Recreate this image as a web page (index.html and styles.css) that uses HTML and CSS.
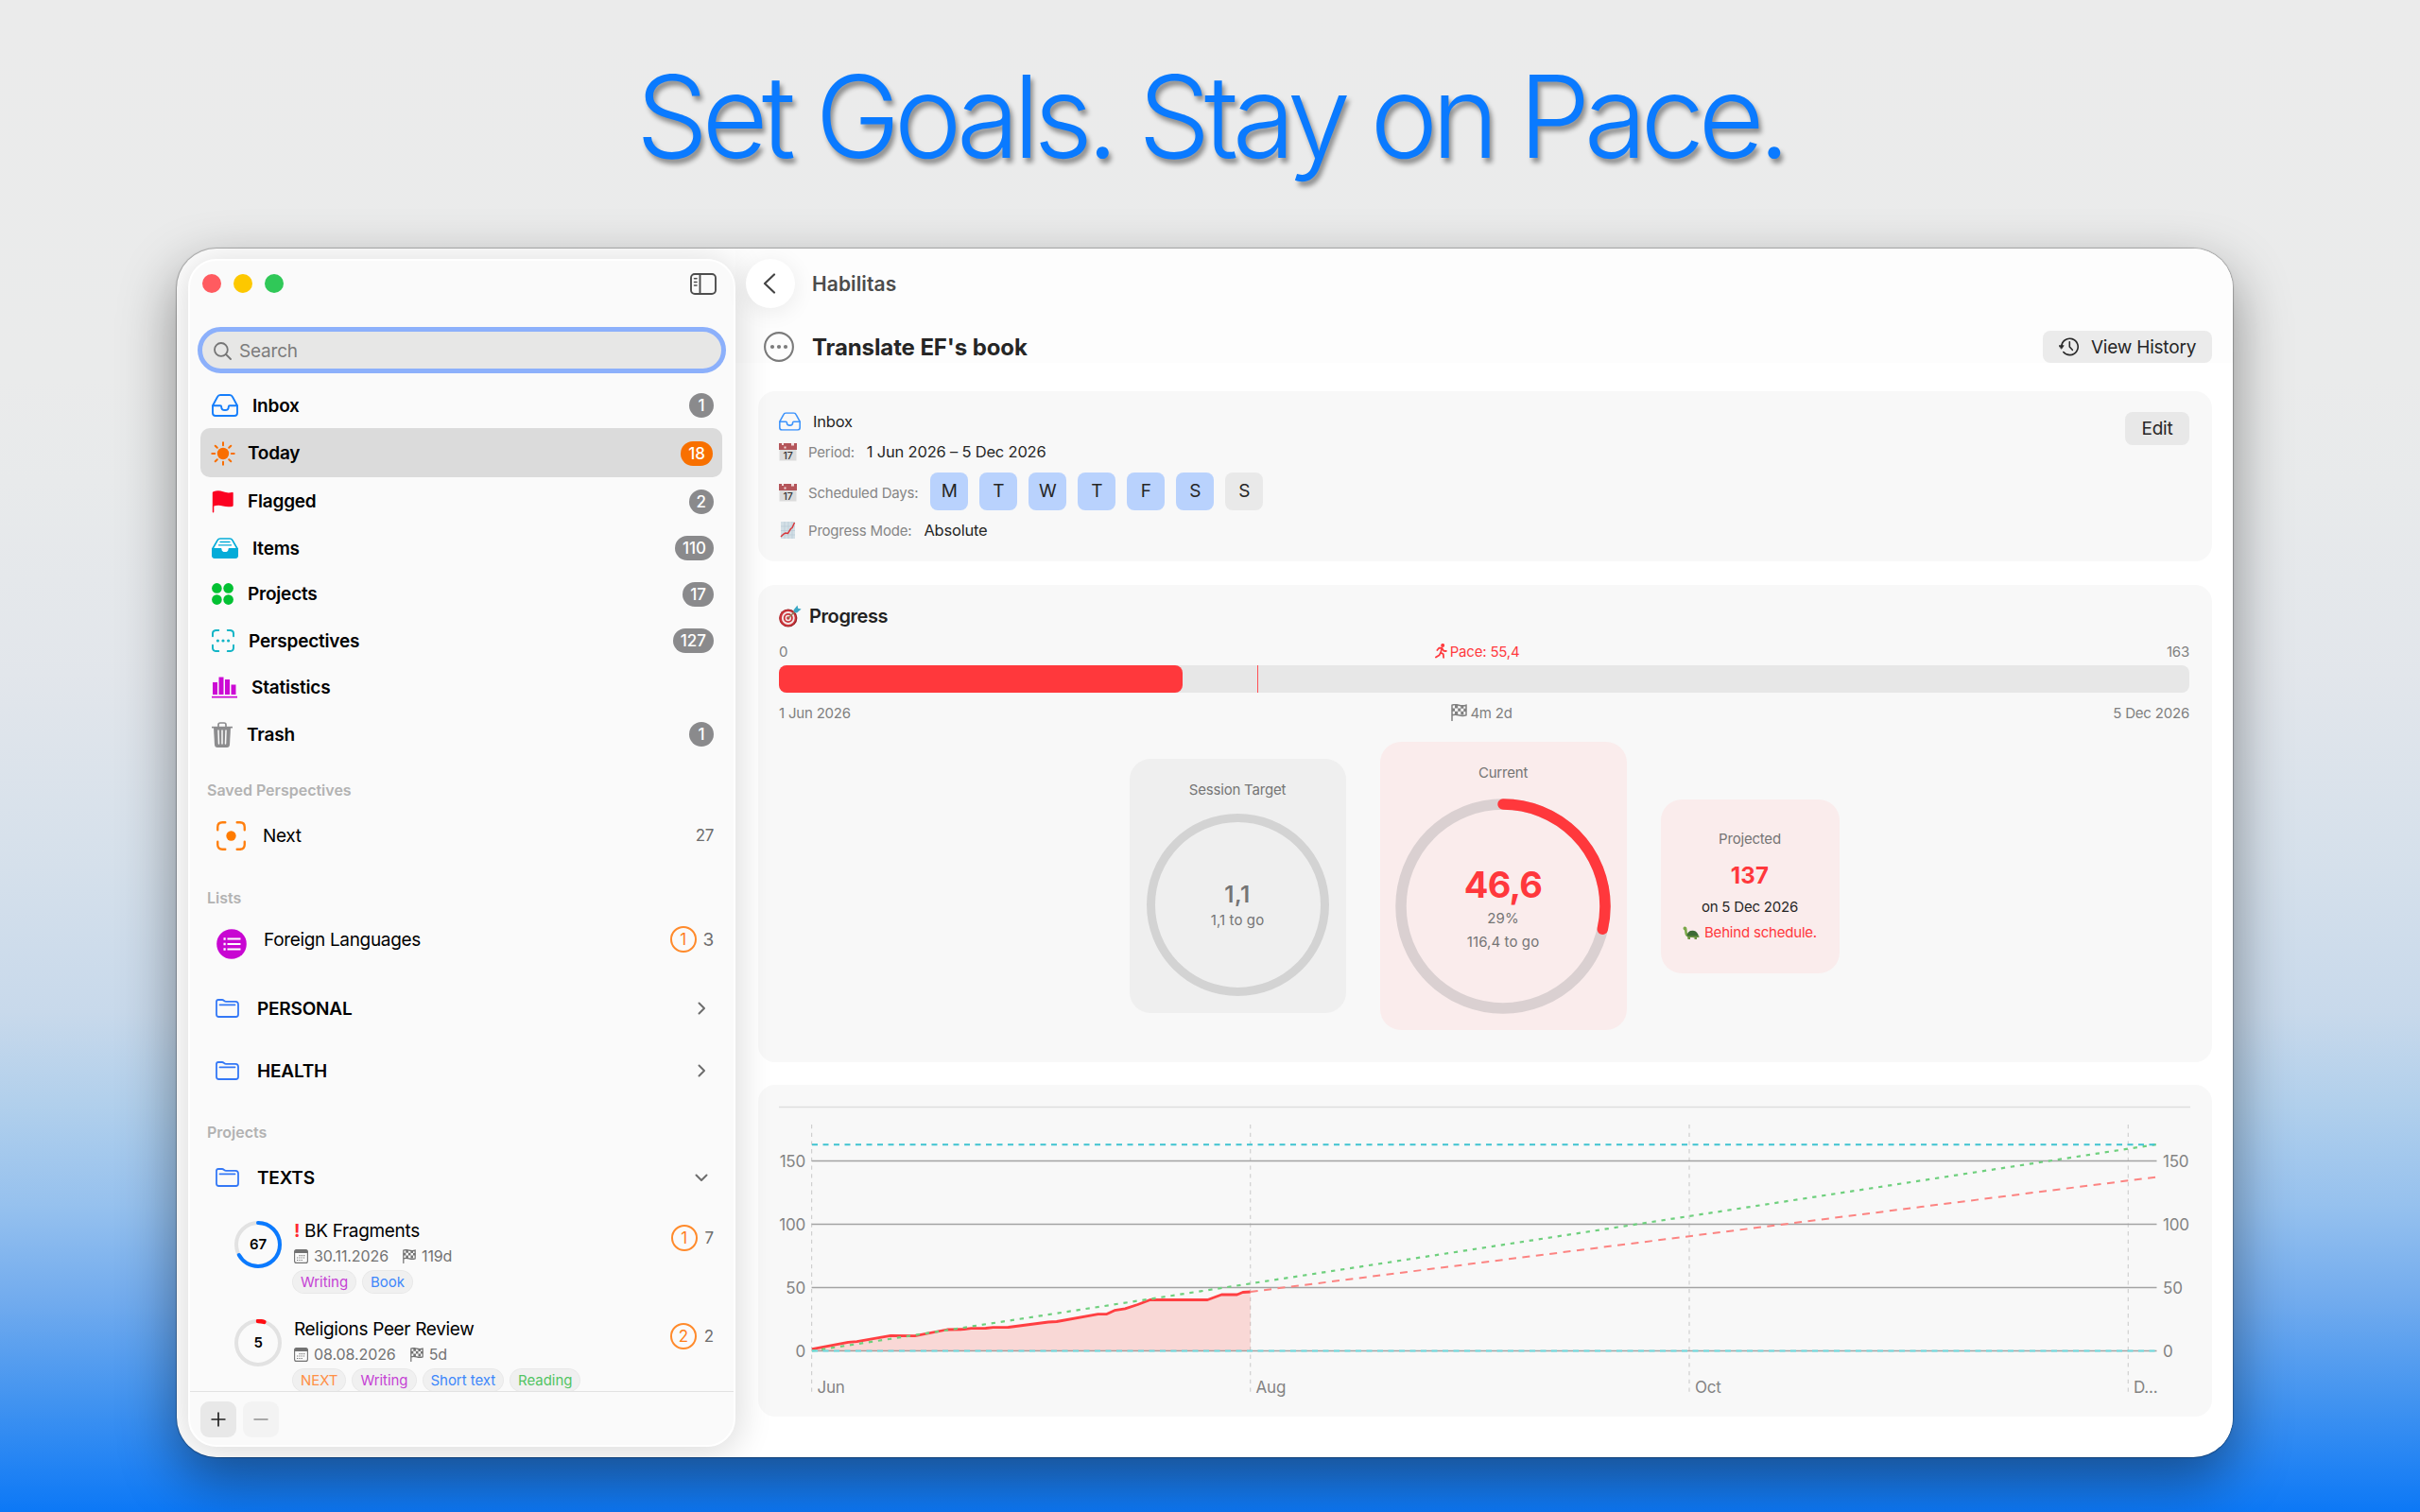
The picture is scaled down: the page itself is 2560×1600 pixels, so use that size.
FILE: index.html
```html
<!DOCTYPE html>
<html lang="en">
<head>
    <meta charset="UTF-8">
    <meta name="viewport" content="width=device-width, initial-scale=1.0">
    <title>Set Goals. Stay on Pace.</title>
    <link rel="stylesheet" href="styles.css">
</head>
<body>
    <!-- shared icons -->
    <svg width="0" height="0" class="defs">
        <symbol id="i-inbox" viewBox="0 0 28 24" fill="none" stroke="currentColor" stroke-width="1.9" stroke-linejoin="round" stroke-linecap="round">
            <path d="M1 12.2 6 3Q7 1 9 1h10q2 0 3 2l5 9.2V20q0 3-3 3H4q-3 0-3-3z"/>
            <path d="M1.2 12.2H9q1.200 0 1.200 1.200 0 3.600 3.800 3.600t3.800-3.600q0-1.200 1.200-1.200h7.800"/>
        </symbol>
        <symbol id="i-folder" viewBox="0 0 25 20" fill="none" stroke="currentColor" stroke-width="1.8" stroke-linejoin="round" stroke-linecap="round">
            <path d="M1 16.500V3q0-2 2-2h4q1 0 1.800.8l.6.500q.7.5 1.700.5H21q3 0 3 3v10.700q0 2.500-2.500 2.500h-18Q1 19 1 16.500z"/>
            <path d="M4.500 6.300h16"/>
        </symbol>
        <symbol id="i-flag" viewBox="0 0 17 18">
            <path d="M1 17.500V1.200q3-1.200 7.200 0t7.800 0v10.600q-3.600 1.200-7.800 0T1 11.800" fill="none" stroke="currentColor" stroke-width="1.500" stroke-linecap="round"/>
            <path d="M4 1h3.200v3.400H4zM10.300 1.500h3v3.300h-3zM7.200 4.400h3.100v3.400H7.200zM13.300 4.800H16v3.100h-2.700zM1 4.400h3v3.300H1zM4 7.700h3.200v3.400H4zM10.300 7.800h3v3.700h-3z" fill="currentColor"/>
        </symbol>
        <symbol id="i-cal" viewBox="0 0 15 15">
            <rect x=".6" y=".6" width="13.800" height="13.800" rx="2" fill="none" stroke="currentColor" stroke-width="1.100"/>
            <path d="M.6 4V2.500Q.6.6 2.500.6h10q1.900 0 1.900 1.900V4z" fill="currentColor"/>
            <path d="M5.500 6.600h6.500M3 9h9M3 11.500h6.500" stroke="currentColor" stroke-width="1.100" stroke-dasharray="1.200 1.100"/>
        </symbol>
        <symbol id="i-frame" viewBox="0 0 30 30" fill="none" stroke="currentColor" stroke-linecap="round">
            <path d="M1.200 9V6q0-4.800 4.800-4.800h3M21 1.200h3q4.800 0 4.800 4.800v3M28.800 21v3q0 4.800-4.800 4.800h-3M9 28.800H6q-4.800 0-4.800-4.800v-3"/>
        </symbol>
        <symbol id="i-date" viewBox="0 0 19 19">
            <rect x=".5" y=".5" width="18" height="18" fill="#dcdcdc"/>
            <path d="M0 0h19v7H0z" fill="#b4555a"/>
            <path d="M3 0h2v2H3zM13 0h3v2.500h-3zM5.500 3.500h2v2h-2z" fill="#f3dede"/>
        </symbol>
    </svg>

    <h1 class="headline">Set Goals. Stay on Pace.</h1>

    <div class="window">
        <aside class="sidebar">
            <div class="titlebar">
                <span class="light red"></span>
                <span class="light yellow"></span>
                <span class="light green"></span>
                <svg class="toggle" width="28" height="23" viewBox="0 0 28 23" fill="none" stroke="#4d4d4d" stroke-width="1.900" stroke-linecap="round">
                    <rect x="1" y="1" width="26" height="21" rx="4"/>
                    <path d="M10.500 1v21"/>
                    <path d="M4.500 5.800H7M4.500 9.400H7M4.500 13H7" stroke-width="1.500"/>
                </svg>
            </div>

            <div class="search">
                <svg width="19" height="19" viewBox="0 0 19 19" fill="none" stroke="#757575" stroke-width="1.800" stroke-linecap="round">
                    <circle cx="7.900" cy="7.900" r="6.900"/>
                    <path d="m13 13 5 5"/>
                </svg>
                <span>Search</span>
            </div>

            <nav class="scroll">
                <div class="row h48"><svg class="c-blue" width="28" height="24"><use href="#i-inbox"/></svg><span>Inbox</span><b class="count">1</b></div>
                <div class="row selected">
                    <svg width="26" height="26" viewBox="0 0 26 26" fill="#f96e00">
                        <circle cx="13" cy="13" r="6.200"/>
                        <path d="M13 1.300v2.900M13 21.800v2.900M1.300 13h2.900M21.800 13h2.900M4.700 4.700l2.100 2.100M19.200 19.200l2.100 2.100M4.700 21.300l2.100-2.100M19.200 6.800l2.100-2.100" stroke="#f96e00" stroke-width="2" stroke-linecap="round"/>
                    </svg>
                    <span>Today</span><b class="count orange">18</b>
                </div>
                <div class="row h51">
                    <svg width="23" height="24" viewBox="0 0 23 24" fill="#fb0221">
                        <path d="M.8 2.300q0-.8.900-1.100Q7-.5 12 1.300t9.500.6q1.200-.2 1.200 1v12.900q0 .9-.9 1.100-5 1-10-.4T2.300 16.600V22.600q0 1-.8 1t-.7-1z"/>
                    </svg>
                    <span>Flagged</span><b class="count">2</b>
                </div>
                <div class="row h48">
                    <svg width="28" height="22" viewBox="0 0 28 22">
                        <path d="M1 11.500 6 2.800Q7 1 9 1h10q2 0 3 1.800l5 8.700V18q0 3-3 3H4q-3 0-3-3z" fill="#fff" stroke="#04acd8" stroke-width="1.700"/>
                        <path d="M0 11h9.500q1 0 1 1.200 0 2.800 3.500 2.800t3.500-2.800q0-1.200 1-1.200H28v7.500q0 3.500-3.500 3.500h-21Q0 22 0 18.500z" fill="#04acd8"/>
                        <path d="M8.500 4.500h11M7 7.800h14" stroke="#04acd8" stroke-width="1.300"/>
                    </svg>
                    <span>Items</span><b class="count">110</b>
                </div>
                <div class="row h49">
                    <svg width="23" height="23" viewBox="0 0 23 23" fill="#02c132">
                        <circle cx="5.400" cy="5.400" r="5.300"/><circle cx="17.600" cy="5.400" r="5.300"/>
                        <circle cx="5.400" cy="17.600" r="5.300"/><circle cx="17.600" cy="17.600" r="5.300"/>
                    </svg>
                    <span>Projects</span><b class="count">17</b>
                </div>
                <div class="row h50">
                    <svg width="24" height="24" viewBox="0 0 30 30" color="#13b5c6" fill="#13b5c6">
                        <use href="#i-frame" stroke-width="2.500"/>
                        <circle cx="8" cy="15" r="2"/><circle cx="15" cy="15" r="2"/><circle cx="22" cy="15" r="2"/>
                    </svg>
                    <span>Perspectives</span><b class="count">127</b>
                </div>
                <div class="row h49">
                    <svg width="27" height="23" viewBox="0 0 27 23" fill="#cc0ad4">
                        <path d="M1 6h5v13H1zM7.500.500h5V19h-5zM14 3h5v16h-5zM20.500 8.500h5V19h-5zM0 20.700h27v1.900H0z"/>
                    </svg>
                    <span>Statistics</span>
                </div>
                <div class="row h50">
                    <svg width="22" height="27" viewBox="0 0 22 27" fill="#8c8c8e">
                        <path d="M7 5V3q0-2 2-2h4q2 0 2 2v2" fill="none" stroke="#8c8c8e" stroke-width="1.700"/>
                        <path d="M0 4.800h22v1.700H0z"/>
                        <path d="M2 6h18l-1 18q-.2 3-3 3H6q-2.800 0-3-3z"/>
                        <path d="M7 9l.5 14M11 9v14M15 9l-.5 14" stroke="#fafafa" stroke-width="1.500" fill="none" stroke-linecap="round"/>
                    </svg>
                    <span>Trash</span><b class="count">1</b>
                </div>

                <h2 class="section">Saved Perspectives</h2>
                <div class="row item h60">
                    <svg width="31" height="31" viewBox="0 0 30 30" color="#ff7f0e">
                        <use href="#i-frame" stroke-width="2.300"/>
                        <circle cx="15" cy="15" r="5" fill="#ff7b00"/>
                    </svg>
                    <span>Next</span><i class="num small">27</i>
                </div>

                <h2 class="section lists">Lists</h2>
                <div class="row item foreign">
                    <svg width="32" height="32" viewBox="0 0 32 32">
                        <circle cx="16" cy="16" r="15.800" fill="#c806d2"/>
                        <path d="M11.500 10.500h14M11.500 16h14M11.500 21.500h14" stroke="#fff" stroke-width="1.900"/>
                        <path d="M7.500 10.500h2.200M7.500 16h2.200M7.500 21.500h2.200" stroke="#fff" stroke-width="2.300"/>
                    </svg>
                    <span>Foreign Languages</span>
                    <i class="due">1</i><i class="num">3</i>
                </div>
                <div class="row folder">
                    <svg class="c-folder" width="25" height="20"><use href="#i-folder"/></svg><span>PERSONAL</span>
                    <svg class="chev" width="9" height="14" viewBox="0 0 9 14"><path d="m1.500 1.500 5.500 5.500-5.500 5.500"/></svg>
                </div>
                <div class="row folder">
                    <svg class="c-folder" width="25" height="20"><use href="#i-folder"/></svg><span>HEALTH</span>
                    <svg class="chev" width="9" height="14" viewBox="0 0 9 14"><path d="m1.500 1.500 5.500 5.500-5.500 5.500"/></svg>
                </div>

                <h2 class="section projects">Projects</h2>
                <div class="row folder h60">
                    <svg class="c-folder" width="25" height="20"><use href="#i-folder"/></svg><span>TEXTS</span>
                    <svg class="chev down" width="14" height="9" viewBox="0 0 14 9"><path d="m1.500 1.500 5.500 5.500 5.500-5.500"/></svg>
                </div>

                <div class="project">
                    <svg class="ring" width="50" height="50" viewBox="0 0 50 50" fill="none" stroke-width="4">
                        <circle cx="25" cy="25" r="23" stroke="#e2e2e2"/>
                        <circle cx="25" cy="25" r="23" stroke="#0a7aff" stroke-linecap="round" pathLength="100" stroke-dasharray="67 100" transform="rotate(-90 25 25)"/>
                        <text x="25" y="30.400" text-anchor="middle">67</text>
                    </svg>
                    <div class="project-body">
                        <div class="name"><b>!</b> BK Fragments</div>
                        <div class="meta">
                            <svg width="15" height="15"><use href="#i-cal"/></svg><span>30.11.2026</span>
                            <svg class="flag" width="14" height="15"><use href="#i-flag"/></svg><span>119d</span>
                        </div>
                        <div class="tags"><span class="tag purple">Writing</span><span class="tag blue">Book</span></div>
                    </div>
                    <i class="due">1</i><i class="num small">7</i>
                </div>
                <div class="project">
                    <svg class="ring" width="50" height="50" viewBox="0 0 50 50" fill="none" stroke-width="4">
                        <circle cx="25" cy="25" r="23" stroke="#e2e2e2"/>
                        <circle cx="25" cy="25" r="23" stroke="#ff0d12" stroke-width="4.500" stroke-linecap="round" pathLength="100" stroke-dasharray="4.500 100" transform="rotate(-90 25 25)"/>
                        <text x="25" y="30.400" text-anchor="middle">5</text>
                    </svg>
                    <div class="project-body">
                        <div class="name">Religions Peer Review</div>
                        <div class="meta">
                            <svg width="15" height="15"><use href="#i-cal"/></svg><span>08.08.2026</span>
                            <svg class="flag" width="14" height="15"><use href="#i-flag"/></svg><span>5d</span>
                        </div>
                        <div class="tags"><span class="tag orange">NEXT</span><span class="tag purple">Writing</span><span class="tag blue">Short text</span><span class="tag green">Reading</span></div>
                    </div>
                    <i class="due">2</i><i class="num small">2</i>
                </div>
            </nav>

            <div class="footer">
                <button class="add"><svg width="16" height="16" viewBox="0 0 16 16"><path d="M8 .5v15M.5 8h15" stroke="#222" stroke-width="1.700"/></svg></button>
                <button class="remove"><svg width="16" height="16" viewBox="0 0 16 16"><path d="M.5 8h15" stroke="#9b9b9b" stroke-width="1.700"/></svg></button>
            </div>
        </aside>

        <main class="main">
            <div class="toolbar">
                <button class="back"><svg width="14" height="22" viewBox="0 0 14 22" fill="none" stroke="#444" stroke-width="2.200" stroke-linecap="round" stroke-linejoin="round"><path d="M12 1.500 2 11l10 9.500"/></svg></button>
                <span>Habilitas</span>
            </div>
            <div class="heading">
                <svg width="32" height="32" viewBox="0 0 32 32" fill="#7b7b7b">
                    <circle cx="16" cy="16" r="14.900" fill="none" stroke="#7b7b7b" stroke-width="2.100"/>
                    <circle cx="9" cy="16" r="2.100"/><circle cx="16" cy="16" r="2.100"/><circle cx="23" cy="16" r="2.100"/>
                </svg>
                <h2>Translate EF's book</h2>
                <button class="history">
                    <svg width="21" height="20" viewBox="0 0 21 20" fill="none" stroke="#2b2b2b" stroke-width="1.600" stroke-linecap="round">
                        <path d="M2.800 10a8.700 8.700 0 1 1 2 5.500"/>
                        <path d="M11.300 4.700V10l3 3.300"/>
                        <path d="M.4 8.700h4.800L2.800 12z" fill="#2b2b2b" stroke-width=".8"/>
                    </svg>
                    View History
                </button>
            </div>

            <section class="card info">
                <div class="line l-inbox"><svg class="c-light" width="23" height="20" viewBox="0 0 28 24"><use href="#i-inbox"/></svg><span>Inbox</span></div>
                <div class="line l-period">
                    <svg class="date" width="19" height="19"><use href="#i-date"/><text x="9.500" y="16.500">17</text></svg>
                    <label>Period:</label><span>1 Jun 2026 – 5 Dec 2026</span>
                </div>
                <div class="line l-days">
                    <svg class="date" width="19" height="19"><use href="#i-date"/><text x="9.500" y="16.500">17</text></svg>
                    <label>Scheduled Days:</label>
                    <div class="days"><b>M</b><b>T</b><b>W</b><b>T</b><b>F</b><b>S</b><b class="off">S</b></div>
                </div>
                <div class="line l-mode">
                    <svg width="19" height="18" viewBox="0 0 19 18">
                        <path d="M2 0h15v18H2z" fill="#d3dfe6"/>
                        <path d="M6 0v18M10 0v18M14 0v18M2 5h15M2 9.500h15M2 14h15" stroke="#b9cad4" stroke-width=".7"/>
                        <path d="M2 16l3-3 2-1 2.500.500 3-5L14 6.500 16.500 1" fill="none" stroke="#d8383c" stroke-width="1.500"/>
                    </svg>
                    <label>Progress Mode:</label><span>Absolute</span>
                </div>
                <button class="edit">Edit</button>
            </section>

            <section class="card progress">
                <h3>
                    <svg width="24" height="24" viewBox="0 0 24 24">
                        <circle cx="9.800" cy="14" r="9.600" fill="#8f1d22"/>
                        <circle cx="9.400" cy="14" r="9" fill="#c9343a"/>
                        <circle cx="9.800" cy="14" r="6.900" fill="#f4e9e9"/>
                        <circle cx="9.800" cy="14" r="5" fill="#c9343a"/>
                        <circle cx="9.800" cy="14" r="3.200" fill="#f4e9e9"/>
                        <circle cx="9.800" cy="14" r="1.700" fill="#c9343a"/>
                        <path d="m10 14 9-9" stroke="#8c7b58" stroke-width="1.500"/>
                        <path d="m15.500 5.500 4-5 .7 3.300 3.400.7-4.600 4-2.700-.4z" fill="#3aa7c4"/>
                    </svg>
                    Progress
                </h3>
                <div class="labels top">
                    <span>0</span>
                    <span class="pace">
                        <svg width="13" height="16" viewBox="0 0 14 17" fill="none" stroke="#ff3b3f" stroke-width="1.900" stroke-linecap="round" stroke-linejoin="round">
                            <circle cx="8.800" cy="2" r="1.200" fill="#ff3b3f"/>
                            <path d="M2.500 7.500 4.500 5 8 5l-1.500 5L9.500 12l.3 4M6.500 10 5 13l-4 2.500M8 5.300l2 3 2.800.2"/>
                        </svg>
                        Pace: 55,4
                    </span>
                    <span>163</span>
                </div>
                <div class="bar">
                    <div class="fill" style="width: 28.6%"></div>
                    <div class="marker" style="left: 33.9%"></div>
                </div>
                <div class="labels bottom">
                    <span>1 Jun 2026</span>
                    <span class="left"><svg width="17" height="18"><use href="#i-flag"/></svg>4m 2d</span>
                    <span>5 Dec 2026</span>
                </div>

                <div class="widgets">
                    <div class="widget session">
                        <h4>Session Target</h4>
                        <div class="dial">
                            <svg width="193" height="193" viewBox="0 0 193 193" fill="none">
                                <circle cx="96.500" cy="96.500" r="92" stroke="#d3d3d3" stroke-width="9"/>
                            </svg>
                            <div class="dial-text"><strong>1,1</strong><span>1,1 to go</span></div>
                        </div>
                    </div>
                    <div class="widget current">
                        <h4>Current</h4>
                        <div class="dial">
                            <svg width="228" height="228" viewBox="0 0 228 228" fill="none" stroke-width="11.500">
                                <circle cx="114" cy="114" r="108" stroke="#dad0d1"/>
                                <circle cx="114" cy="114" r="108" stroke="#ff383c" stroke-linecap="round" pathLength="100" stroke-dasharray="28.600 100" transform="rotate(-90 114 114)"/>
                            </svg>
                            <div class="dial-text"><strong>46,6</strong><span>29%</span><span>116,4 to go</span></div>
                        </div>
                    </div>
                    <div class="widget projected">
                        <h4>Projected</h4>
                        <strong>137</strong>
                        <span>on 5 Dec 2026</span>
                        <em>
                            <svg width="18" height="14" viewBox="0 0 18 14">
                                <path d="M.5 2.500Q.5.300 2.500.500t2 2.500L4.800 7l2 3-1.500 1.500Q2.500 10.500 2.300 7L2 4.500Q.7 4 .5 2.500z" fill="#7aa84a"/>
                                <path d="M4.500 10.500Q5 4.500 11 4.800q5 .5 6 6.700-6 2-12.500-1z" fill="#3c6b34"/>
                                <path d="M5 10.500h12.500v1.300H15V14h-2.500v-2H8v2H5.500z" fill="#6b9440"/>
                            </svg>
                            Behind schedule.
                        </em>
                    </div>
                </div>
            </section>

            <section class="card chart">
                <svg width="1538" height="351" viewBox="802 1148 1538 351" fill="none">
                    <path d="M824 1171.500h1493" stroke="#dedede" stroke-width="1.500"/>
                    <!-- month and value grid -->
                    <path d="M858.600 1190v287M1322.700 1190v287M1787 1190v287M2251.300 1190v287" stroke="#d0d0d0" stroke-width="1.200" stroke-dasharray="4.300 4.400"/>
                    <path d="M858.600 1228.500H2281.500M858.600 1295.500H2281.500M858.600 1362.500H2281.500M858.600 1429.500H2281.500" stroke="#a3a3a3" stroke-width="1.300"/>
                    <!-- actual progress -->
                    <path d="M859 1427.700 897.300 1420.300 906.500 1419.700 942.200 1413.300 967.800 1413.700 1001.900 1407 1019.800 1406.700 1027.400 1405.700 1042.800 1405.500 1050.400 1404.700 1066.700 1404.500 1109 1399 1117.800 1398.500 1161.600 1390.700 1170.800 1390.500 1179 1386.700 1190.200 1384.800 1203.500 1380.500 1216.700 1375.500 1277.400 1375.500 1292.200 1370 1308.600 1370 1314.700 1367.500 1322.700 1367V1429.500H859z" fill="#ff3b30" fill-opacity=".17"/>
                    <path d="M859 1427.700 897.300 1420.300 906.500 1419.700 942.200 1413.300 967.800 1413.700 1001.900 1407 1019.800 1406.700 1027.400 1405.700 1042.800 1405.500 1050.400 1404.700 1066.700 1404.500 1109 1399 1117.800 1398.500 1161.600 1390.700 1170.800 1390.500 1179 1386.700 1190.200 1384.800 1203.500 1380.500 1216.700 1375.500 1277.400 1375.500 1292.200 1370 1308.600 1370 1314.700 1367.500 1322.700 1367" stroke="#ff3f42" stroke-width="2.800" stroke-linejoin="round"/>
                    <!-- projection, pace and target lines -->
                    <path d="M1322.700 1367 2281.500 1245.500" stroke="#fc8482" stroke-width="2" stroke-dasharray="8 6.500"/>
                    <path d="M859 1429.500 2281.500 1211" stroke="#6fd07e" stroke-width="2.200" stroke-dasharray="4.300 5.800"/>
                    <path d="M859 1211.200H2281.500" stroke="#3fc3d0" stroke-width="1.900" stroke-dasharray="6 5.500"/>
                    <path d="M859 1429.500H2281.500" stroke="#6fdbe0" stroke-width="1.900" stroke-dasharray="6 5.500"/>
                    <g class="axis">
                        <g text-anchor="end">
                            <text x="852" y="1235">150</text><text x="852" y="1302">100</text><text x="852" y="1369">50</text><text x="852" y="1436">0</text>
                        </g>
                        <text x="2288" y="1235">150</text><text x="2288" y="1302">100</text><text x="2288" y="1369">50</text><text x="2288" y="1436">0</text>
                        <text x="864.500" y="1474">Jun</text><text x="1328.600" y="1474">Aug</text><text x="1793" y="1474">Oct</text><text x="2257" y="1474">D...</text>
                    </g>
                </svg>
            </section>
        </main>
    </div>
</body>
</html>
```

FILE: styles.css
```css
* {
    box-sizing: border-box;
}
body {
    margin: 0;
    width: 2560px;
    height: 1600px;
    overflow: hidden;
    font-family: Inter, "Liberation Sans", sans-serif;
    font-size: 19px;
    letter-spacing: -0.2px;
    color: #000;
    background: linear-gradient(#ebebeb 0, #eaebeb 400px, #e8eaeb 510px, #e2e6eb 714px, #d5e0eb 918px, #c8d9eb 1071px, #b0cfec 1173px, #96c1ee 1275px, #71abee 1378px, #4394f0 1480px, #0c78f6 1600px);
}
h1, h2, h3, h4 {
    margin: 0;
}
svg {
    display: block;
    flex: none;
}
i, em {
    font-style: normal;
}
button {
    border: none;
    padding: 0;
    font: inherit;
    letter-spacing: inherit;
    display: flex;
    align-items: center;
    justify-content: center;
}
.defs {
    position: absolute;
}
.headline {
    height: 263px;
    padding-top: 48px;
    text-align: center;
    font-size: 121px;
    line-height: 150px;
    font-weight: 350;
    letter-spacing: -6.7px;
    color: #0a7aff;
    text-shadow: 3px 5px 5px rgba(0, 0, 0, 0.4);
}
.window {
    width: 2175px;
    height: 1279px;
    margin-left: 187px;
    padding: 11px 0 11px 12px;
    display: flex;
    border-radius: 42px;
    background: #fff;
    box-shadow: 0 0 1px 1px rgba(0, 0, 0, 0.25), 0 24px 60px rgba(0, 0, 0, 0.42);
    overflow: hidden;
}

/* sidebar */
.sidebar {
    position: relative;
    z-index: 1;
    width: 579px;
    height: 1257px;
    display: flex;
    flex-direction: column;
    border: 2px solid #fff;
    border-radius: 30px;
    background: #fafafa;
    box-shadow: 0 4px 36px 4px rgba(0, 0, 0, 0.14);
    overflow: hidden;
    flex: none;
}
.titlebar {
    height: 70px;
    padding: 15px 18px 0 13px;
    display: flex;
    gap: 13px;
}
.light {
    width: 20px;
    height: 20px;
    border-radius: 50%;
    margin-top: -1px;
}
.red {
    background: #ff5b60;
}
.yellow {
    background: #fdc800;
}
.green {
    background: #30c858;
}
.toggle {
    margin: -2px 0 0 auto;
}
.search {
    height: 49px;
    margin: 0 8px 0 8px;
    padding: 1px 12px 0;
    border: 5px solid #8cb0fb;
    border-radius: 25px;
    background: #e7e7e6;
    color: #7c7c7c;
    display: flex;
    align-items: center;
    gap: 8px;
    flex: none;
}
.scroll {
    flex: 1;
    padding-top: 10px;
    overflow: hidden;
}
.row {
    padding: 0 21px 0 23px;
    display: flex;
    align-items: center;
    gap: 15px;
    font-weight: 600;
}
.h48 { height: 48px; }
.h49 { height: 49px; }
.h50 { height: 50px; }
.h51 { height: 51px; }
.row.h60 { height: 60px; }
.row.selected {
    height: 52px;
    margin: 0 12px 0 11px;
    padding: 1px 10px 0 11px;
    gap: 13px;
    border-radius: 10px;
    background: #dbdbdb;
}
.c-blue { color: #157efb; }
.c-light { color: #3d93fb; }
.c-folder { color: #3478f6; }
.count {
    height: 26px;
    min-width: 26px;
    padding: 0 8px;
    margin-left: auto;
    border-radius: 13px;
    background: #8a8a8c;
    color: #fff;
    font-size: 17px;
    line-height: 26px;
    font-weight: 500;
    letter-spacing: 0;
    text-align: center;
}
.count.orange {
    background: #f87000;
}
.section {
    height: 36px;
    margin-top: 16px;
    padding-left: 18px;
    font-size: 16px;
    line-height: 36px;
    font-weight: 600;
    letter-spacing: 0;
    color: #b2b2b2;
}
.section.lists {
    margin-top: 18px;
}
.section.projects {
    margin-top: 14px;
}
.item {
    padding-left: 28px;
    gap: 18px;
    font-weight: 400;
    letter-spacing: -0.33px;
}
.foreign {
    height: 52px;
    margin-bottom: 14px;
}
.foreign svg {
    margin-top: 10px;
}
.num {
    margin-left: auto;
    color: #6e6e6e;
    font-weight: 400;
}
.num.small {
    font-size: 17px;
}
.due {
    width: 28px;
    height: 28px;
    margin-left: auto;
    border: 2px solid #ff8a2b;
    border-radius: 50%;
    color: #ff7f1a;
    font-size: 17px;
    line-height: 24px;
    text-align: center;
}
.due + .num {
    margin-left: -11px;
}
.folder {
    height: 66px;
    padding-left: 27px;
    gap: 19px;
}
.chev {
    margin: 0 8px 0 auto;
    fill: none;
    stroke: #6d6d6d;
    stroke-width: 2;
    stroke-linecap: round;
    stroke-linejoin: round;
}
.chev.down {
    margin-right: 6px;
}
.project {
    height: 79px;
    margin: 14px 21px 25px 47px;
    display: flex;
    align-items: flex-start;
}
.project .ring {
    margin-top: 2px;
}
.ring text {
    fill: #000;
    font-size: 15px;
    font-weight: 600;
}
.project-body {
    margin-left: 13px;
}
.name {
    line-height: 26px;
    letter-spacing: -0.33px;
}
.name b {
    color: #ff2a2f;
}
.meta {
    height: 26px;
    display: flex;
    align-items: center;
    gap: 6px;
    font-size: 16px;
    letter-spacing: -0.1px;
    color: #727272;
}
.meta .flag {
    margin-left: 9px;
}
.tags {
    margin: 2px 0 0 -2px;
    display: flex;
    gap: 6px;
}
.tag {
    height: 25px;
    padding: 0 9px;
    border-radius: 13px;
    background: #f0f0f0;
    box-shadow: inset 0 0 0 1px rgba(0, 0, 0, 0.03);
    font-size: 15px;
    line-height: 25px;
    letter-spacing: -0.05px;
}
.tag.purple { color: #c542d4; }
.tag.blue { color: #3d87fb; }
.tag.orange { color: #ff8f45; }
.tag.green { color: #52c463; }
.project .due {
    margin-top: 6px;
}
.project .num {
    line-height: 40px;
}
.project .due + .num {
    margin-left: 8px;
}
.footer {
    height: 57px;
    padding: 10px 11px;
    border-top: 1.5px solid #e2e2e2;
    display: flex;
    gap: 7px;
    flex: none;
}
.footer button {
    width: 38px;
    height: 38px;
    border-radius: 9px;
    background: #e8e8e8;
}
.footer .remove {
    background: #f3f3f3;
}

/* main column */
.main {
    flex: 1;
    margin-top: -11px;
    padding-right: 22px;
    background: linear-gradient(#fdfdfd 121px, #fff 121px);
}
.toolbar {
    position: relative;
    z-index: 2;
    height: 74px;
    padding-left: 11px;
    display: flex;
    align-items: center;
    gap: 18px;
    font-size: 21px;
    font-weight: 600;
    letter-spacing: 0.1px;
    color: #4c4c4c;
}
.back {
    width: 52px;
    height: 52px;
    padding-right: 3px;
    border-radius: 50%;
    background: #fff;
    box-shadow: 0 4px 24px rgba(0, 0, 0, 0.08);
}
.heading {
    height: 60px;
    padding-left: 30px;
    display: flex;
    align-items: center;
}
.heading h2 {
    margin-left: 19px;
    font-size: 24px;
    font-weight: 700;
    letter-spacing: -0.1px;
    color: #262626;
}
.history {
    width: 179px;
    height: 34px;
    margin-left: auto;
    gap: 13px;
    border-radius: 8px;
    background: #ebebeb;
    color: #262626;
}
.card {
    margin-left: 24px;
    border-radius: 18px;
    background: #f8f8f8;
}
.info {
    position: relative;
    height: 180px;
    margin-top: 17px;
    padding: 17px 22px;
    color: #262626;
    font-size: 16.5px;
}
.line {
    display: flex;
    align-items: center;
}
.line label {
    margin-left: 12px;
    font-size: 15px;
    color: #868686;
}
.line span {
    margin-left: 13px;
}
.date text {
    fill: #333;
    font-size: 10.5px;
    font-weight: 500;
    text-anchor: middle;
}
.l-inbox { height: 30px; }
.l-period { height: 34px; }
.l-days { height: 52px; }
.l-mode { height: 28px; }
.days {
    margin: -2px 0 0 13px;
    display: flex;
    gap: 12px;
}
.days b {
    width: 40px;
    height: 40px;
    border-radius: 8px;
    background: #b9d2fd;
    font-size: 19px;
    line-height: 40px;
    font-weight: 400;
    text-align: center;
}
.days .off {
    background: #e9e9e9;
}
.edit {
    position: absolute;
    top: 22px;
    right: 24px;
    width: 68px;
    height: 35px;
    border-radius: 8px;
    background: #e8e8e8;
    color: #262626;
    font-size: 19px;
}
.progress {
    height: 505px;
    margin-top: 25px;
    padding: 19px 24px 0 22px;
}
.progress h3 {
    height: 28px;
    display: flex;
    align-items: center;
    gap: 8px;
    font-size: 20px;
    font-weight: 600;
    letter-spacing: -0.4px;
    color: #222;
}
.labels {
    height: 28px;
    display: flex;
    justify-content: space-between;
    align-items: center;
    font-size: 15px;
    color: #808080;
}
.labels.top {
    margin-top: 9px;
}
.labels.bottom {
    margin-top: 7px;
}
.labels span {
    display: flex;
    align-items: center;
    gap: 3px;
}
.labels .pace {
    color: #ff3b3f;
}
.bar {
    position: relative;
    height: 29px;
    margin-top: 1px;
    border-radius: 8px;
    background: #e7e7e7;
}
.fill {
    height: 29px;
    border-radius: 8px;
    background: #ff383c;
}
.marker {
    position: absolute;
    top: 0;
    width: 1px;
    height: 29px;
    background: #ff5155;
}
.widgets {
    margin-top: 17px;
    display: flex;
    justify-content: center;
    align-items: center;
    gap: 36px;
}
.widget {
    display: flex;
    flex-direction: column;
    align-items: center;
    border-radius: 22px;
    background: #faecec;
    color: #757575;
    font-size: 15px;
}
.widget h4 {
    font-size: 15px;
    line-height: 20px;
    font-weight: 400;
}
.session {
    width: 229px;
    height: 269px;
    padding-top: 23px;
    background: #efefef;
}
.session .dial {
    margin-top: 15px;
}
.current {
    width: 261px;
    height: 305px;
    padding-top: 23px;
}
.current .dial {
    margin-top: 17px;
}
.dial {
    display: grid;
    place-items: center;
}
.dial > * {
    grid-area: 1 / 1;
}
.dial-text {
    display: flex;
    flex-direction: column;
    align-items: center;
    line-height: 27px;
    letter-spacing: 0.1px;
}
.session strong {
    font-size: 24px;
    font-weight: 600;
    letter-spacing: 0.5px;
}
.session .dial-text {
    margin-top: 5px;
}
.current strong {
    font-size: 38px;
    line-height: 46px;
    font-weight: 700;
    letter-spacing: -0.7px;
    color: #ff383c;
}
.current .dial-text {
    margin-top: 3px;
}
.current .dial-text span {
    line-height: 25px;
}
.projected {
    width: 189px;
    height: 184px;
    padding-top: 32px;
}
.projected strong {
    margin-top: 9px;
    font-size: 24px;
    line-height: 40px;
    font-weight: 700;
    letter-spacing: 0.2px;
    color: #ff383c;
}
.projected span {
    line-height: 26px;
    color: #262626;
}
.projected em {
    display: flex;
    align-items: center;
    gap: 5px;
    line-height: 28px;
    color: #ff383c;
}
.chart {
    height: 351px;
    margin-top: 24px;
}
.axis text {
    fill: #838383;
    font-size: 17px;
}
```
